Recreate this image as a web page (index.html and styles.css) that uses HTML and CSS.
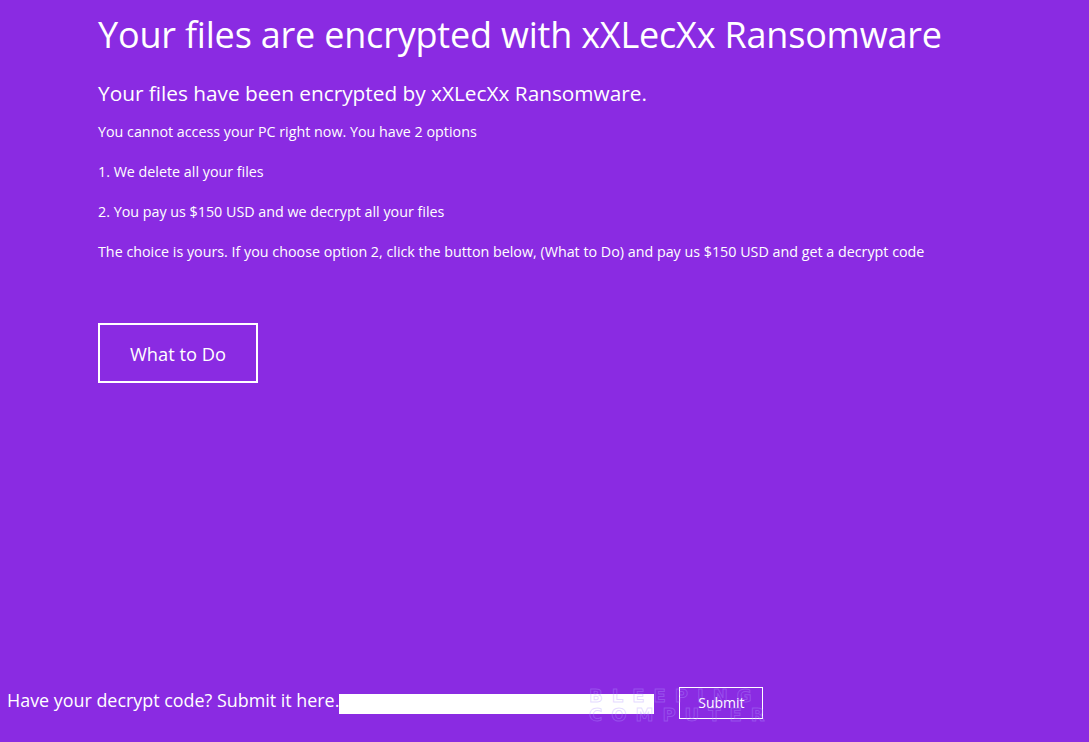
FILE: index.html
```html
<!DOCTYPE html>
<html>
<head>
<meta charset="utf-8">
<link rel="stylesheet" href="styles.css">
</head>
<body>
<div class="page">
  <main class="note">
    <h1 class="title">Your files are encrypted with xXLecXx Ransomware</h1>
    <h2 class="subtitle">Your files have been encrypted by xXLecXx Ransomware.</h2>
    <p class="line">You cannot access your PC right now. You have 2 options</p>
    <p class="line">1. We delete all your files</p>
    <p class="line">2. You pay us $150 USD and we decrypt all your files</p>
    <p class="line">The choice is yours. If you choose option 2, click the button below, (What to Do) and pay us $150 USD and get a decrypt code</p>
    <button class="what-btn">What to Do</button>
  </main>
  <footer class="footer">
    <span class="prompt">Have your decrypt code? Submit it here.</span>
    <input class="code-input" type="text">
    <button class="submit-btn">Submit</button>
    <div class="watermark"><span>BLEEPING</span><span>COMPUTER</span></div>
  </footer>
</div>
</body>
</html>
```

FILE: styles.css
```css
html, body {
  margin: 0;
  padding: 0;
}
body {
  background: #8a2be2;
  color: #ffffff;
  font-family: "Open Sans", "Noto Sans", sans-serif;
}
.page {
  display: flex;
  flex-direction: column;
  min-height: 742px;
  box-sizing: border-box;
}
.note {
  padding: 10px 0 0 98px;
  display: flex;
  flex-direction: column;
  align-items: flex-start;
}
.title {
  margin: 0;
  font-size: 36px;
  font-weight: 400;
  line-height: 50px;
  letter-spacing: -0.2px;
}
.subtitle {
  margin: 19px 0 0 0;
  font-size: 20.8px;
  font-weight: 400;
  line-height: 28px;
}
.line {
  margin: 0;
  font-size: 14.3px;
  line-height: 40px;
}
.subtitle + .line {
  margin-top: 5px;
}
.what-btn {
  margin-top: 51px;
  width: 160px;
  height: 60px;
  background: transparent;
  border: 2px solid #ffffff;
  color: #ffffff;
  font-family: inherit;
  font-size: 18.3px;
  padding: 0;
}
.footer {
  margin-top: auto;
  position: relative;
  display: flex;
  align-items: center;
  padding: 0 0 24px 7px;
  height: 31px;
}
.prompt {
  font-size: 17.9px;
  margin-bottom: 6px;
}
.code-input {
  width: 315px;
  height: 20px;
  box-sizing: border-box;
  border: none;
  background: #ffffff;
  margin: 0 25px 0 0;
  padding: 0;
  position: relative;
  top: 1px;
}
.submit-btn {
  width: 84px;
  height: 32px;
  background: transparent;
  border: 1px solid #ffffff;
  color: #ffffff;
  font-family: inherit;
  font-size: 14px;
  padding: 0;
}
.watermark {
  position: absolute;
  left: 589px;
  top: -1px;
  display: flex;
  flex-direction: column;
  font-family: "DejaVu Sans", sans-serif;
  font-weight: 700;
  font-size: 18px;
  line-height: 19px;
  letter-spacing: 9px;
  color: transparent;
  -webkit-text-stroke: 1px rgba(180, 150, 255, 0.35);
  pointer-events: none;
}
```
